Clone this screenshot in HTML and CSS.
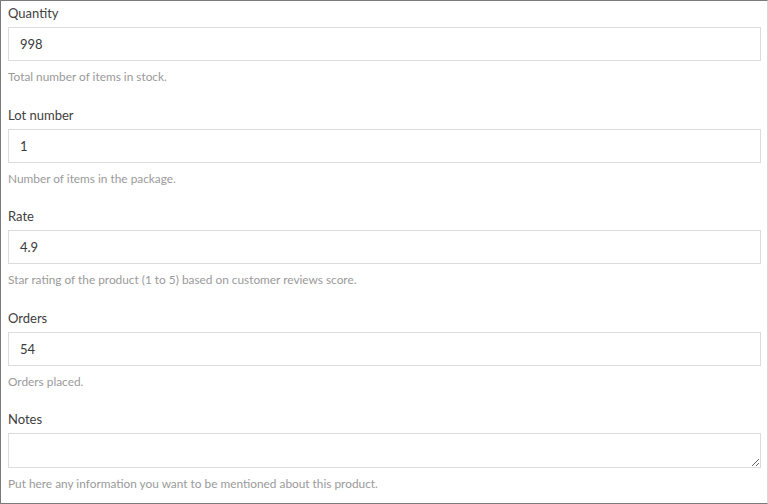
FILE: index.html
```html
<!DOCTYPE html>
<html>
<head>
<meta charset="utf-8">
<link rel="stylesheet" href="styles.css">
</head>
<body>
<div class="frame">
  <div class="group">
    <label class="label">Quantity</label>
    <div class="input">998</div>
    <div class="help">Total number of items in stock.</div>
  </div>
  <div class="group">
    <label class="label">Lot number</label>
    <div class="input">1</div>
    <div class="help">Number of items in the package.</div>
  </div>
  <div class="group">
    <label class="label">Rate</label>
    <div class="input">4.9</div>
    <div class="help">Star rating of the product (1 to 5) based on customer reviews score.</div>
  </div>
  <div class="group">
    <label class="label">Orders</label>
    <div class="input">54</div>
    <div class="help">Orders placed.</div>
  </div>
  <div class="group">
    <label class="label">Notes</label>
    <textarea class="textarea"></textarea>
    <div class="help">Put here any information you want to be mentioned about this product.</div>
  </div>
</div>
</body>
</html>
```
FILE: styles.css
```css
html, body { margin: 0; padding: 0; background: #fff; }
.frame {
  box-sizing: border-box;
  width: 768px;
  height: 504px;
  border: 1px solid #7a7a7a;
  border-right-color: #d8d8d8;
  padding: 0 6px 0 7px;
  font-family: "Lato", "Noto Sans", sans-serif;
  color: #333;
  overflow: hidden;
}
.group { display: flex; flex-direction: column; }
.label {
  font-size: 13px;
  line-height: 20px;
  padding-top: 2px;
  margin-bottom: 4px;
  color: #404040;
}
.input, .textarea {
  box-sizing: border-box;
  height: 34px;
  border: 1px solid #dcdcdc;
  padding: 0 11px;
  font-size: 13px;
  line-height: 32px;
  color: #3a3a3a;
  font-family: inherit;
  background: #fff;
}
.textarea { height: 35px; resize: vertical; display: block; width: 100%; margin: 0; }
.help {
  font-size: 11.85px;
  line-height: 18px;
  margin-top: 7px;
  margin-bottom: 16.6px;
  color: #9a9a9a;
}
```
